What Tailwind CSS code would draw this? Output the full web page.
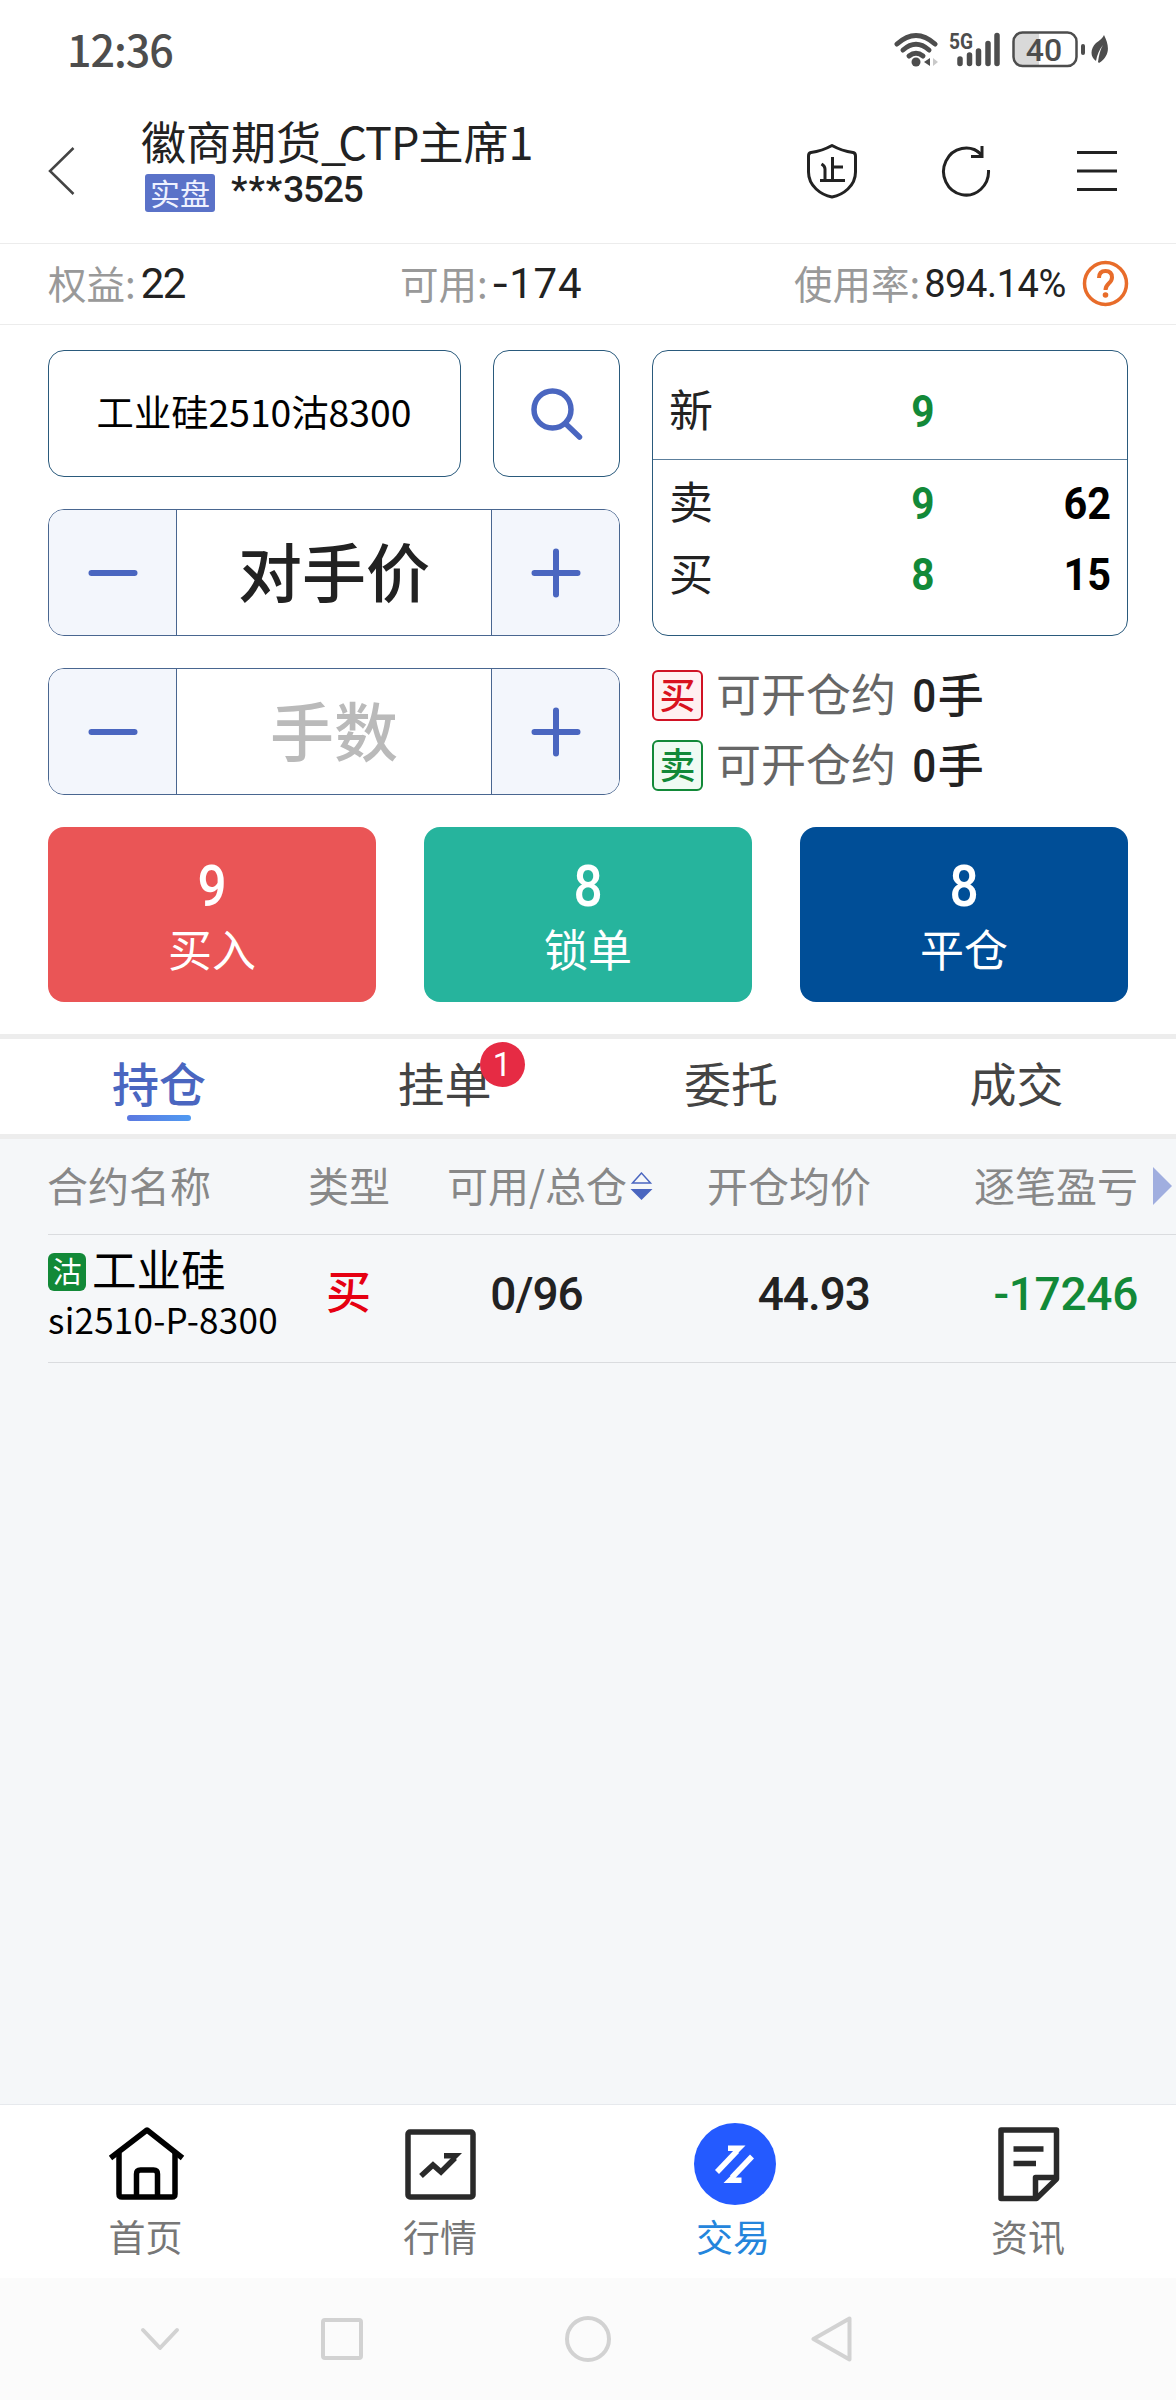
<!DOCTYPE html>
<html lang="zh-CN">
<head>
    <meta charset="UTF-8">
    <meta name="viewport" content="width=device-width, initial-scale=1.0">
    <title>交易</title>
    <script src="https://cdn.jsdelivr.net/npm/@tailwindcss/browser@4"></script>
</head>

<body class="bg-white font-['Noto_Sans_CJK_SC',sans-serif] leading-none text-[#222]">
<div class="w-[1176px] h-[2400px] flex flex-col overflow-hidden">

    <!-- status bar -->
    <div class="h-[100px] shrink-0 flex items-center justify-between pl-[67px] pr-[66px] text-[#4d4d4d]">
        <span class="text-[43px] font-medium tracking-[-1px] -mt-[4px]">12:36</span>
        <svg class="w-[220px] h-[40px]" viewBox="890 30 220 40" fill="none" stroke="#4d4d4d">
            <g stroke-width="5" stroke-linecap="round">
                <path d="M897 44Q916 27 935 44"/>
                <path d="M903 50Q916 38.500 929 50"/>
                <path d="M909 56Q916 50.500 923 56"/>
            </g>
            <circle cx="916" cy="62" r="4.500" fill="#4d4d4d" stroke="none"/>
            <path d="M924 62l6-4v8z" fill="#4d4d4d" stroke="none"/>
            <path d="M938 62l-5-4v8z" fill="#c9c9c9" stroke="none"/>
            <path d="M960 59v4.500M969.500 55v8.500M978.500 51v12.500M988 43.500v20M997 35.500v28" stroke-width="5.500" stroke-linecap="round"/>
            <text x="949" y="49" font-family="Roboto" font-size="21.500" font-weight="700" textLength="24" lengthAdjust="spacingAndGlyphs" fill="#4d4d4d" stroke="none">5G</text>
            <path d="M1020 32.500h19v33h-19q-7-1-7-8v-17q0-7 7-8z" fill="#d9d9d9" stroke="none"/>
            <rect x="1013.500" y="32.500" width="63" height="33.500" rx="9" stroke-width="2.500"/>
            <rect x="1081" y="44" width="4" height="11" rx="2" fill="#4d4d4d" stroke="none"/>
            <text x="1044" y="61" font-family="Roboto" font-size="32" font-weight="500" text-anchor="middle" fill="#4d4d4d" stroke="none">40</text>
            <path d="M1104 35c5 10 7 20-5 28l-1-1c1-7 2-12 5-17c-4 5-6 10-7 16c-6-4-6-12 0-18c4-3 7-5 8-8z" fill="#4d4d4d" stroke="none"/>
        </svg>
    </div>

    <!-- title bar -->
    <div class="h-[144px] shrink-0 flex items-center border-b border-[#ececec] pl-[48px] pr-[58px] pb-px">
        <svg class="w-[27px] h-[50px]" viewBox="0 0 27 50" fill="none" stroke="#444" stroke-width="2.500"><path d="M25.500 2L2 25l23.500 23"/></svg>
        <div class="self-start mt-[18px] ml-[66px] flex flex-col gap-[11px]">
            <h1 class="text-[45px] whitespace-nowrap"><span>徽商期货</span><span class="tracking-[-8px]">_</span><span class="tracking-[-1px]">CTP</span>主席1</h1>
            <div class="flex items-start">
                <span class="ml-[4px] w-[70px] h-[38px] rounded-[3px] bg-[#5a72c8] text-[#eef1ff] text-[30px] leading-none flex items-center justify-center pb-[3px]">实盘</span>
                <span class="ml-[16px] mt-[-3px] font-[Roboto] font-medium text-[37px] tracking-[-1.200px]"><span class="tracking-[1px]">***</span>3525</span>
            </div>
        </div>
        <div class="ml-auto flex items-center">
            <svg class="w-[52px] h-[56px]" viewBox="806 143 52 56" fill="none" stroke="#222" stroke-width="3">
                <path d="M832 145.500Q842 151 853 152.500Q855.500 153 855.500 156V172C855.500 186 843 195 832 197C821 195 808.500 186 808.500 172V156Q808.500 153 811 152.500Q822 151 832 145.500z" stroke-linejoin="round"/>
                <path d="M820 180.500h25M832.500 157v23M833 167h10M825 180v-11q0-3-3.500-5"/>
            </svg>
            <svg class="ml-[83px] w-[50px] h-[52px]" viewBox="941 145 50 52" fill="none" stroke="#222" stroke-width="3">
                <path d="M988.500 170A22.500 23.500 0 1 1 981 154"/>
                <path d="M971 156.500h11V146"/>
                <path d="M974 149l8 7" stroke-width="2"/>
            </svg>
            <svg class="ml-[85px] w-[42px] h-[42px]" viewBox="0 0 42 42" stroke="#222" stroke-width="3"><path d="M1 2.500h40M1 21h40M1 39.500h40"/></svg>
        </div>
    </div>

    <!-- account summary -->
    <div class="h-[81px] shrink-0 grid grid-cols-[353px_353px_1fr] items-center border-b border-[#ececec] pl-[48px] pr-[47px] text-[38.500px] text-[#999]">
        <div class="flex items-center"><span class="-mt-[4px]">权益:</span><span class="ml-[5px] font-[Roboto] text-[42px] tracking-[-1.500px] text-[#222]">22</span></div>
        <div class="flex items-center"><span class="-mt-[4px] -ml-px">可用:</span><span class="ml-[5px] font-[Roboto] text-[42px] tracking-[0.800px] text-[#222]"><span class="inline-block origin-left scale-x-125 mr-[4px]">-</span>174</span></div>
        <div class="flex items-center justify-end">
            <span class="-mt-[4px]">使用率:</span><span class="ml-[4px] font-[Roboto] text-[38px] tracking-[-0.400px] text-[#222]">894.14%</span>
            <svg class="ml-[16px] w-[47px] h-[47px] -mt-px" viewBox="0 0 47 47" fill="none" stroke="#e86c2a" stroke-width="3.500">
                <circle cx="23.500" cy="23.500" r="21"/>
                <path d="M17 18q0-7 6.500-7t6.500 6.500c0 6-6.500 5.500-6.500 12.500" stroke-width="4"/>
                <circle cx="23.500" cy="35" r="2.800" fill="#e86c2a" stroke="none"/>
            </svg>
        </div>
    </div>

    <!-- order form -->
    <div class="shrink-0 px-[48px] pt-[25px] pb-[32px]">
        <div class="grid grid-cols-[572px_476px] gap-x-[32px]">
            <div class="flex flex-col gap-[32px]">
                <div class="h-[127px] flex gap-[32px]">
                    <div class="w-[413px] rounded-[16px] border border-[#2a5a7c] flex items-center justify-center text-[37.300px] text-black pb-[4px] pr-px">工业硅2510沽8300</div>
                    <div class="w-[127px] rounded-[16px] border border-[#2a5a7c] flex items-center justify-center">
                        <svg class="w-[52px] h-[52px]" viewBox="0 0 52 52" fill="none" stroke="#4a66c0" stroke-width="5.500" stroke-linecap="round"><circle cx="21.500" cy="21.500" r="18.500"/><path d="M36 37l12.500 12"/></svg>
                    </div>
                </div>
                <div class="h-[127px] rounded-[16px] border border-[#496690] overflow-hidden flex">
                    <div class="w-[128px] bg-[#f3f6fc] border-r border-[#496690] flex items-center justify-center">
                        <svg class="w-[50px] h-[50px]" viewBox="0 0 50 50" stroke="#4a66c0" stroke-width="6" stroke-linecap="round"><path d="M3.500 25h43"/></svg>
                    </div>
                    <div class="flex-1 flex items-center justify-center text-[64px] font-medium pb-[7px]">对手价</div>
                    <div class="w-[128px] bg-[#f3f6fc] border-l border-[#496690] flex items-center justify-center">
                        <svg class="w-[50px] h-[50px]" viewBox="0 0 50 50" stroke="#4a66c0" stroke-width="6" stroke-linecap="round"><path d="M3.500 25h43M25 3.500v43"/></svg>
                    </div>
                </div>
                <div class="h-[127px] rounded-[16px] border border-[#496690] overflow-hidden flex">
                    <div class="w-[128px] bg-[#f3f6fc] border-r border-[#496690] flex items-center justify-center">
                        <svg class="w-[50px] h-[50px]" viewBox="0 0 50 50" stroke="#4a66c0" stroke-width="6" stroke-linecap="round"><path d="M3.500 25h43"/></svg>
                    </div>
                    <div class="flex-1 flex items-center justify-center text-[64px] font-medium text-[#bababa] pb-[7px]">手数</div>
                    <div class="w-[128px] bg-[#f3f6fc] border-l border-[#496690] flex items-center justify-center">
                        <svg class="w-[50px] h-[50px]" viewBox="0 0 50 50" stroke="#4a66c0" stroke-width="6" stroke-linecap="round"><path d="M3.500 25h43M25 3.500v43"/></svg>
                    </div>
                </div>
            </div>

            <div>
                <div class="h-[286px] rounded-[16px] border border-[#2a5a7c] text-[44px]">
                    <div class="h-[109px] pt-[11px] border-b border-[#5c7f9c] grid grid-cols-[224px_60px_1fr] items-center px-[16px]">
                        <span class="-mt-[5px]">新</span>
                        <span class="font-[Roboto] font-bold text-[45px] text-[#128938] text-center scale-x-90 mt-px">9</span>
                    </div>
                    <div class="pt-[8px]">
                        <div class="h-[71px] grid grid-cols-[224px_60px_1fr] items-center px-[16px]">
                            <span class="-mt-[7px]">卖</span>
                            <span class="font-[Roboto] font-bold text-[45px] text-[#128938] text-center scale-x-90">9</span>
                            <span class="font-[Roboto] font-bold text-[45px] text-black text-right origin-right scale-x-92">62</span>
                        </div>
                        <div class="h-[71px] grid grid-cols-[224px_60px_1fr] items-center px-[16px]">
                            <span class="-mt-[5px]">买</span>
                            <span class="font-[Roboto] font-bold text-[45px] text-[#128938] text-center scale-x-90">8</span>
                            <span class="font-[Roboto] font-bold text-[45px] text-black text-right origin-right scale-x-92">15</span>
                        </div>
                    </div>
                </div>
                <div class="mt-[34px] flex flex-col gap-[19px] text-[45px] text-[#666]">
                    <div class="h-[51px] flex items-center">
                        <span class="w-[51px] h-[51px] rounded-[6px] border-2 border-[#d01224] bg-[#fff0f1] text-[#d9121f] text-[36px] font-medium flex items-center justify-center pb-[6px]">买</span>
                        <span class="ml-[13px] -mt-[7px]">可开仓约</span>
                        <span class="ml-[15px] font-[Roboto] font-medium text-[47px] text-[#222] scale-x-90">0</span>
                        <span class="-mt-[7px] text-[46px] font-medium text-[#222]">手</span>
                    </div>
                    <div class="h-[51px] flex items-center">
                        <span class="w-[51px] h-[51px] rounded-[6px] border-2 border-[#128938] bg-[#f0fbf3] text-[#128938] text-[36px] font-medium flex items-center justify-center pb-[6px]">卖</span>
                        <span class="ml-[13px] -mt-[7px]">可开仓约</span>
                        <span class="ml-[15px] font-[Roboto] font-medium text-[47px] text-[#222] scale-x-90">0</span>
                        <span class="-mt-[7px] text-[46px] font-medium text-[#222]">手</span>
                    </div>
                </div>
            </div>
        </div>

        <div class="mt-[32px] grid grid-cols-3 gap-[48px] text-white text-center text-[44px]">
            <button class="h-[175px] rounded-[16px] bg-[#ea5556] flex flex-col items-center pt-[31px]">
                <span class="font-[Roboto] font-medium text-[57px] leading-none scale-x-90">9</span>
                <span class="mt-[11px] leading-none">买入</span>
            </button>
            <button class="h-[175px] rounded-[16px] bg-[#26b49d] flex flex-col items-center pt-[31px]">
                <span class="font-[Roboto] font-medium text-[57px] leading-none scale-x-90">8</span>
                <span class="mt-[11px] leading-none">锁单</span>
            </button>
            <button class="h-[175px] rounded-[16px] bg-[#004e97] flex flex-col items-center pt-[31px]">
                <span class="font-[Roboto] font-medium text-[57px] leading-none scale-x-90">8</span>
                <span class="mt-[11px] leading-none">平仓</span>
            </button>
        </div>
    </div>

    <!-- tabs -->
    <div class="h-[105px] shrink-0 border-y-[5px] border-[#ededed] px-[16px] grid grid-cols-4 text-center text-[47px] text-[#444]">
        <div class="pt-[19px] flex flex-col items-center font-medium text-[#4a66c0]">
            <span>持仓</span>
            <span class="mt-[10px] w-[64px] h-[6px] rounded-full bg-linear-to-r from-[#5b78e0] to-[#4f9af2]"></span>
        </div>
        <div class="pt-[19px] pr-px">
            <span class="relative">挂单<span class="absolute left-[82px] -top-[5px] w-[45px] h-[45px] rounded-full bg-[#e62b44] text-white text-[33px] flex items-center justify-center font-[Roboto]">1</span></span>
        </div>
        <div class="pt-[19px]">委托</div>
        <div class="pt-[19px] pr-px">成交</div>
    </div>

    <!-- positions -->
    <div class="flex-1 bg-[#f5f7f9]">
        <div class="ml-[48px] h-[96px] border-b border-[#dadcdf] grid grid-cols-[250px_102px_274px_197px_267px_1fr] items-center pb-[5px] text-[41px] text-[#888] whitespace-nowrap">
            <span class="-ml-px">合约名称</span>
            <span class="text-center">类型</span>
            <span class="text-center">
                <span class="relative">可用/总仓<svg class="absolute left-full ml-[3px] top-[17px] w-[23px] h-[30px]" viewBox="0 0 23 30"><path d="M11.500 2L2.500 12h18z" fill="none" stroke="#4a66c0" stroke-width="1.500"/><path d="M0.500 18h22l-11 11z" fill="#4a66c0"/></svg></span>
            </span>
            <span class="text-right">开仓均价</span>
            <span class="text-right">逐笔盈亏</span>
            <svg class="ml-[15px] mt-[4px] w-[19px] h-[38px]" viewBox="0 0 19 38"><path d="M0 0l19 19L0 38z" fill="#a0aedf"/></svg>
        </div>
        <div class="ml-[48px] h-[128px] border-b border-[#dadcdf] grid grid-cols-[250px_102px_274px_197px_267px_1fr] items-center font-[Roboto] font-medium text-[46px] whitespace-nowrap">
            <div class="self-start pt-[11px] font-['Noto_Sans_CJK_SC',sans-serif] font-normal text-black">
                <div class="flex items-start">
                    <span class="mt-[7px] w-[38px] h-[38px] rounded-[6px] bg-[#128938] text-white text-[29px] flex items-center justify-center pb-[3px]">沽</span>
                    <span class="ml-[6px] text-[44.500px]">工业硅</span>
                </div>
                <div class="mt-[10px] text-[35px] tracking-[0.250px]">si2510-P-8300</div>
            </div>
            <span class="text-center font-['Noto_Sans_CJK_SC',sans-serif] text-[45px] text-[#e60012] -mt-[18px] -ml-px">买</span>
            <span class="text-center tracking-[-1px] -mt-[9px] -ml-px">0/96</span>
            <span class="text-right tracking-[-1px] -mt-[9px] pr-px">44.93</span>
            <span class="text-right tracking-[-0.300px] text-[#128938] -mt-[9px]">-17246</span>
        </div>
    </div>

    <!-- app nav -->
    <div class="h-[174px] shrink-0 bg-white border-t border-[#e6e9ed] grid grid-cols-4 text-[37px] text-[#777]">
        <div class="flex flex-col items-center pt-[18px]">
            <svg class="w-[82px] h-[82px]" viewBox="106 2122 82 82" fill="none" stroke="#000" stroke-width="5.500" stroke-linejoin="round">
                <path d="M110.500 2157L147 2129L182.500 2157"/>
                <path d="M119 2152v41q0 3 3 3h50q3 0 3-3v-41"/>
                <path d="M136.500 2196v-23q0-4 4-4h13q4 0 4 4v23"/>
            </svg>
            <span class="mt-[13px] -ml-[3px]">首页</span>
        </div>
        <div class="flex flex-col items-center pt-[18px]">
            <svg class="w-[82px] h-[82px]" viewBox="400 2122 82 82" fill="none" stroke="#2a2a2a" stroke-width="5.500">
                <rect x="408" y="2131" width="65" height="65" rx="2"/>
                <path d="M421 2175l12-11l8 7l14-14"/>
                <path d="M444 2152h18l-11 11v-5.500h-7z" fill="#2a2a2a" stroke="none"/>
            </svg>
            <span class="mt-[13px] -ml-[2px]">行情</span>
        </div>
        <div class="flex flex-col items-center pt-[18px] text-[#2485dc]">
            <svg class="w-[82px] h-[82px]" viewBox="694 2122 82 82" fill="none" stroke="#fff" stroke-width="5.500">
                <circle cx="735" cy="2163" r="41" fill="#245aff" stroke="none"/>
                <path d="M717 2171l20-21"/>
                <path d="M728 2144.500h17.500l-9 9l-3-3.500h-5.500z" fill="#fff" stroke="none"/>
                <path d="M752 2155.500l-20 21"/>
                <path d="M741.500 2182h-18l9-9l3 3.500h6z" fill="#fff" stroke="none"/>
            </svg>
            <span class="mt-[13px] -ml-[4px]">交易</span>
        </div>
        <div class="flex flex-col items-center pt-[18px]">
            <svg class="w-[82px] h-[82px]" viewBox="988 2122 82 82" fill="none" stroke="#2a2a2a" stroke-width="5.500" stroke-linejoin="round">
                <path d="M1001 2129h55.500v49l-20 19.500H1001z"/>
                <path d="M1056 2176.500h-20.500v21"/>
                <path d="M1013.500 2148h30M1013.500 2162.500h22.500"/>
            </svg>
            <span class="mt-[13px] -ml-[2px]">资讯</span>
        </div>
    </div>

    <!-- system nav -->
    <div class="h-[122px] shrink-0 bg-[#fbfbfb] flex items-center pl-[139px]">
        <svg class="w-[42px] h-[26px]" viewBox="0 0 42 26" fill="none" stroke="#d2d2d2" stroke-width="4" stroke-linecap="round" stroke-linejoin="round"><path d="M4 4l17 18L38 4"/></svg>
        <svg class="ml-[140px] w-[42px] h-[42px]" viewBox="0 0 42 42" fill="none" stroke="#d2d2d2" stroke-width="4"><rect x="2" y="2" width="38" height="38" rx="2"/></svg>
        <svg class="ml-[202px] w-[46px] h-[46px]" viewBox="0 0 46 46" fill="none" stroke="#d2d2d2" stroke-width="4"><circle cx="23" cy="23" r="21"/></svg>
        <svg class="ml-[200px] w-[41px] h-[46px]" viewBox="0 0 41 46" fill="none" stroke="#d2d2d2" stroke-width="4" stroke-linejoin="round"><path d="M38.500 2.500v41L2.500 23z"/></svg>
    </div>
</div>
</body>
</html>
